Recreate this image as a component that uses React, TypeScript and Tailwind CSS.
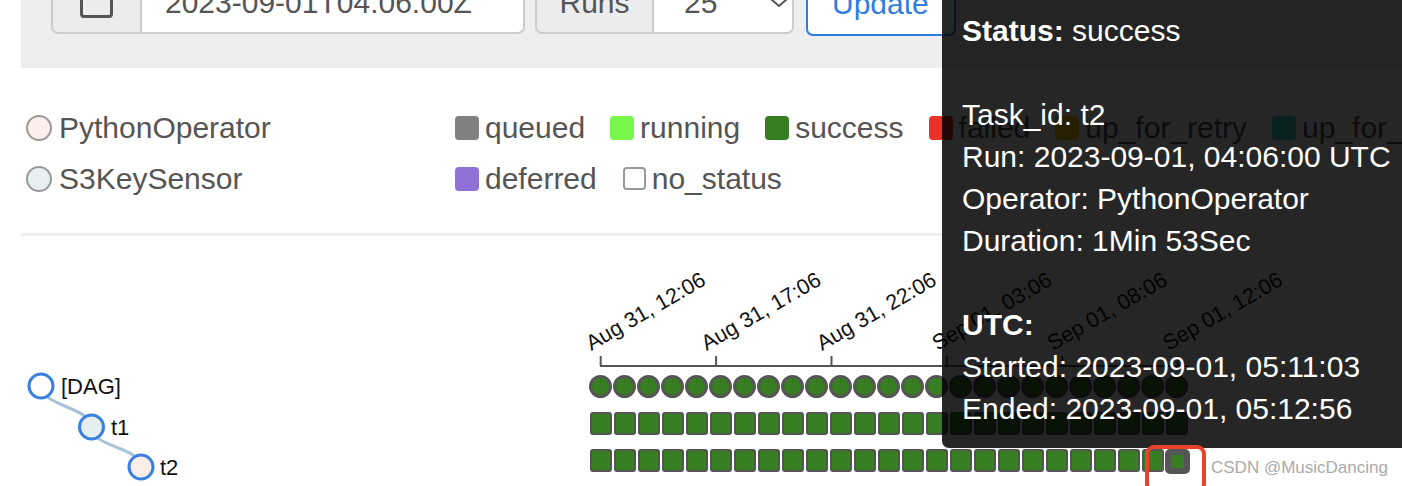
import React from "react";

const font = { fontFamily: '"Liberation Sans", Arial, Helvetica, sans-serif' };

function LegendSquare({ color, label }: { color: string; label: string }) {
  return (
    <div className="flex items-center gap-[6px] shrink-0">
      <div className={`w-[24px] h-[24px] rounded-[4px] ${color}`} />
      <span>{label}</span>
    </div>
  );
}

const ticks = [
  "Aug 31, 12:06",
  "Aug 31, 17:06",
  "Aug 31, 22:06",
  "Sep 01, 03:06",
  "Sep 01, 08:06",
  "Sep 01, 12:06",
];

export default function App() {
  const cells = Array.from({ length: 25 }, (_, i) => i);
  return (
    <div
      className="relative w-[1402px] h-[486px] overflow-hidden bg-white text-[#555555]"
      style={font}
    >
      {/* top control band */}
      <div className="ml-[21px] h-[68px] bg-[#eeeeee] flex items-start pl-[30px]">
        <div className="-mt-[30px] h-[64px] w-[474px] flex shrink-0">
          <div className="w-[91px] h-full bg-[#ececec] border-2 border-[#cccccc] rounded-l-[7px] flex items-center justify-center">
            <div className="w-[33px] h-[33px] border-[3px] border-[#555555] rounded-[4px] -translate-y-[1px]" />
          </div>
          <div className="flex-1 h-full bg-white border-2 border-l-0 border-[#cccccc] rounded-r-[7px] flex items-center pl-[23px] text-[30px]">
            2023-09-01T04:06:00Z
          </div>
        </div>
        <div className="ml-[10px] -mt-[30px] h-[64px] w-[259px] flex shrink-0">
          <div className="w-[119px] h-full bg-[#ececec] border-2 border-[#cccccc] rounded-l-[7px] flex items-center justify-center text-[30px]">
            Runs
          </div>
          <div className="flex-1 h-full bg-white border-2 border-l-0 border-[#cccccc] rounded-r-[7px] flex items-center justify-between pl-[30px] pr-[4px] text-[30px]">
            <span>25</span>
            <svg width="18" height="10" viewBox="0 0 18 10" className="translate-y-[1px]">
              <polyline points="1,1 9,8 17,1" fill="none" stroke="#555" strokeWidth="2" />
            </svg>
          </div>
        </div>
        <div className="ml-[12px] -mt-[30px] h-[66px] w-[150px] shrink-0 bg-white border-2 border-[#2f7de1] rounded-[7px] flex items-center pl-[24px] text-[30px] text-[#2f7de1]">
          Update
        </div>
      </div>

      {/* legend */}
      <div className="pt-[34px] flex text-[30px] whitespace-nowrap">
        <div className="w-[455px] shrink-0 pl-[26px] flex flex-col">
          <div className="h-[51px] flex items-center gap-[7px]">
            <div className="w-[26px] h-[26px] rounded-full border-2 border-[#999999] bg-[#fbeeea]" />
            <span>PythonOperator</span>
          </div>
          <div className="h-[51px] flex items-center gap-[7px]">
            <div className="w-[26px] h-[26px] rounded-full border-2 border-[#999999] bg-[#e6f0f1]" />
            <span>S3KeySensor</span>
          </div>
        </div>
        <div className="flex flex-col shrink-0">
          <div className="h-[51px] flex items-center gap-[25px]">
            <LegendSquare color="bg-[#808080]" label="queued" />
            <LegendSquare color="bg-[#77f74b]" label="running" />
            <LegendSquare color="bg-[#377e22]" label="success" />
            <LegendSquare color="bg-[#e8322a]" label="failed" />
            <LegendSquare color="bg-[#ffd700]" label="up_for_retry" />
            <LegendSquare color="bg-[#40e0d0]" label="up_for_reschedule" />
          </div>
          <div className="h-[51px] flex items-center gap-[26px]">
            <LegendSquare color="bg-[#9071d6]" label="deferred" />
            <div className="flex items-center gap-[6px]">
              <div className="w-[23px] h-[23px] rounded-[4px] border-2 border-[#999999] bg-white" />
              <span>no_status</span>
            </div>
          </div>
        </div>
      </div>

      <div className="mt-[29px] ml-[21px] h-[3px] bg-[#eeeeee]" />

      {/* tree + grid */}
      <div className="flex h-[250px]">
        <svg width="589" height="250" className="shrink-0">
          <path d="M41,150 C41,170 91,171 91,191" fill="none" stroke="#a7c3dc" strokeWidth="3" />
          <path d="M91,191 C91,211 141,211 141,231" fill="none" stroke="#a7c3dc" strokeWidth="3" />
          <circle cx="41" cy="150" r="12" fill="#ffffff" stroke="#3a80e2" strokeWidth="3" />
          <circle cx="91.5" cy="191" r="12" fill="#e6eff0" stroke="#3a80e2" strokeWidth="3" />
          <circle cx="141" cy="231" r="12" fill="#fbeeea" stroke="#3a80e2" strokeWidth="3" />
          <g fontSize="22" fill="#111" style={font}>
            <text x="61" y="158">[DAG]</text>
            <text x="111" y="199">t1</text>
            <text x="160" y="239">t2</text>
          </g>
        </svg>
        <div className="flex flex-col">
          <svg width="700" height="139" className="overflow-visible">
            <line x1="11" y1="130" x2="600" y2="130" stroke="#555" strokeWidth="2" />
            {ticks.map((t, i) => {
              const x = 11.7 + i * 115.4;
              const lx = x - 9.5;
              return (
                <g key={t}>
                  <line x1={x} y1="120" x2={x} y2="130" stroke="#555" strokeWidth="2" />
                  <text
                    x={lx}
                    y="115"
                    fontSize="21.5"
                    fill="#111"
                    style={font}
                    transform={`rotate(-30 ${lx} 115)`}
                  >
                    {t}
                  </text>
                </g>
              );
            })}
          </svg>
          <div className="h-[40px] flex gap-[1px]">
            {cells.map((i) => (
              <div key={i} className="w-[23px] h-[23px] shrink-0 rounded-full border-[3px] border-[#555555] bg-[#377e22]" />
            ))}
          </div>
          <div className="h-[40px] flex gap-[2px] pl-[1px]">
            {cells.map((i) => (
              <div key={i} className="w-[22px] h-[23px] shrink-0 rounded-[3px] border-2 border-[#555555] bg-[#377e22]" />
            ))}
          </div>
          <div className="h-[40px] flex items-start gap-[2px] pl-[1px]">
            {cells.map((i) =>
              i === 24 ? (
                <div key={i} className="w-[25px] h-[25px] shrink-0 -ml-[1px] rounded-[5px] border-[6px] border-[#555555] bg-[#377e22]" />
              ) : (
                <div key={i} className="w-[22px] h-[23px] shrink-0 rounded-[3px] border-2 border-[#555555] bg-[#377e22]" />
              )
            )}
          </div>
        </div>
      </div>

      {/* tooltip */}
      <div className="absolute left-[942px] top-0 right-0 pl-[20px] pt-[10px] pb-[18px] bg-black/85 rounded-bl-[7px] text-white text-[30px] leading-[42px] whitespace-nowrap">
        <div>
          <b>Status:</b> success
        </div>
        <div>&nbsp;</div>
        <div>Task_id: t2</div>
        <div>Run: 2023-09-01, 04:06:00 UTC</div>
        <div>Operator: PythonOperator</div>
        <div>Duration: 1Min 53Sec</div>
        <div>&nbsp;</div>
        <div>
          <b>UTC:</b>
        </div>
        <div>Started: 2023-09-01, 05:11:03</div>
        <div>Ended: 2023-09-01, 05:12:56</div>
      </div>

      {/* annotation */}
      <div className="absolute left-[1145px] top-[445px] w-[61px] h-[48px] border-[4px] border-[#e8432a] rounded-[9px]" />
      <div className="absolute left-[1211px] top-[455px] text-[17px] text-[#aaaaaa] whitespace-nowrap">
        CSDN @MusicDancing
      </div>
    </div>
  );
}
